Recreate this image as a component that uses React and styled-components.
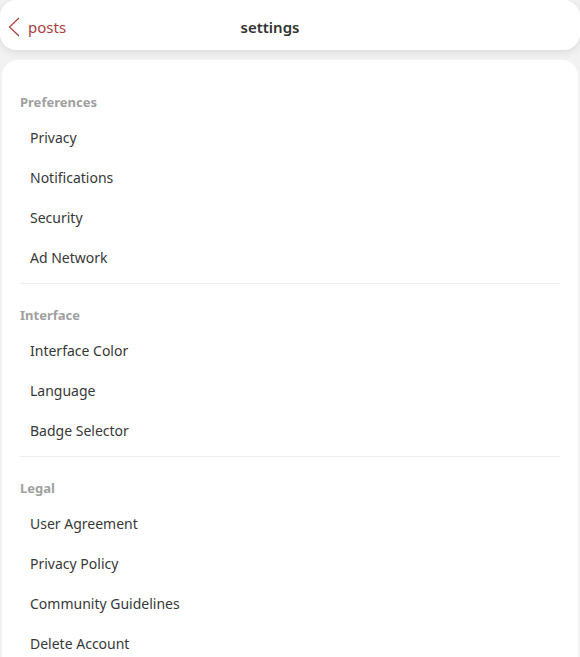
import styled, { createGlobalStyle } from "styled-components";

const GlobalStyle = createGlobalStyle`
	html, body {
		margin: 0;
		padding: 0;
		background: #f2f2f2;
		font-family: "Noto Sans", "Open Sans", sans-serif;
	}
	* {
		box-sizing: border-box;
	}
`;

const Page = styled.div`
	width: 580px;
	height: 657px;
	overflow: hidden;
	display: flex;
	flex-direction: column;
	gap: 10px;
`;
const Header = styled.header`
	height: 50px;
	background: white;
	border-radius: 16px;
	box-shadow: 0 2px 8px 0 rgb(0 0 0 / 10%);
	display: grid;
	grid-template-columns: 1fr auto 1fr;
	align-items: center;
	padding: 4px 48px 0 8px;
	flex-shrink: 0;
`;
const Back = styled.div`
	display: flex;
	align-items: center;
	gap: 8px;
	color: #a9403f;
	font-size: 15px;
	cursor: pointer;
`;
const Title = styled.h1`
	margin: 0;
	font-size: 15px;
	font-weight: 600;
	color: #333;
`;
const Card = styled.div`
	flex-grow: 1;
	margin: 0 2px;
	background: white;
	border-radius: 16px 16px 0 0;
	padding: 11px 18px 0;
`;
const Section = styled.section`
	padding: 21px 0 5px;
	border-bottom: ${p => p.last ? "none" : "1px solid #ececec"};
`;
const Label = styled.div`
	font-size: 13px;
	font-weight: 700;
	color: #a0a0a0;
	line-height: 20px;
	margin-bottom: 6px;
`;
const Item = styled.div`
	height: 40px;
	line-height: 40px;
	padding-left: 10px;
	font-size: 14px;
	color: #383838;
	cursor: pointer;
`;

const sections = [
	{ title: "Preferences", items: ["Privacy", "Notifications", "Security", "Ad Network"] },
	{ title: "Interface", items: ["Interface Color", "Language", "Badge Selector"] },
	{ title: "Legal", items: ["User Agreement", "Privacy Policy", "Community Guidelines", "Delete Account"] }
];

const App = () => (
	<>
		<GlobalStyle />
		<Page>
			<Header>
				<Back>
					<svg width="12" height="20" viewBox="0 0 12 20" fill="none">
						<polyline points="11,1 1.5,10 11,19" stroke="#a9403f" strokeWidth="1.2" />
					</svg>
					posts
				</Back>
				<Title>settings</Title>
				<div />
			</Header>
			<Card>
				{sections.map(({ title, items }, i) => (
					<Section key={title} last={i === sections.length - 1}>
						<Label>{title}</Label>
						{items.map(item => <Item key={item}>{item}</Item>)}
					</Section>
				))}
			</Card>
		</Page>
	</>
);

export default App;
